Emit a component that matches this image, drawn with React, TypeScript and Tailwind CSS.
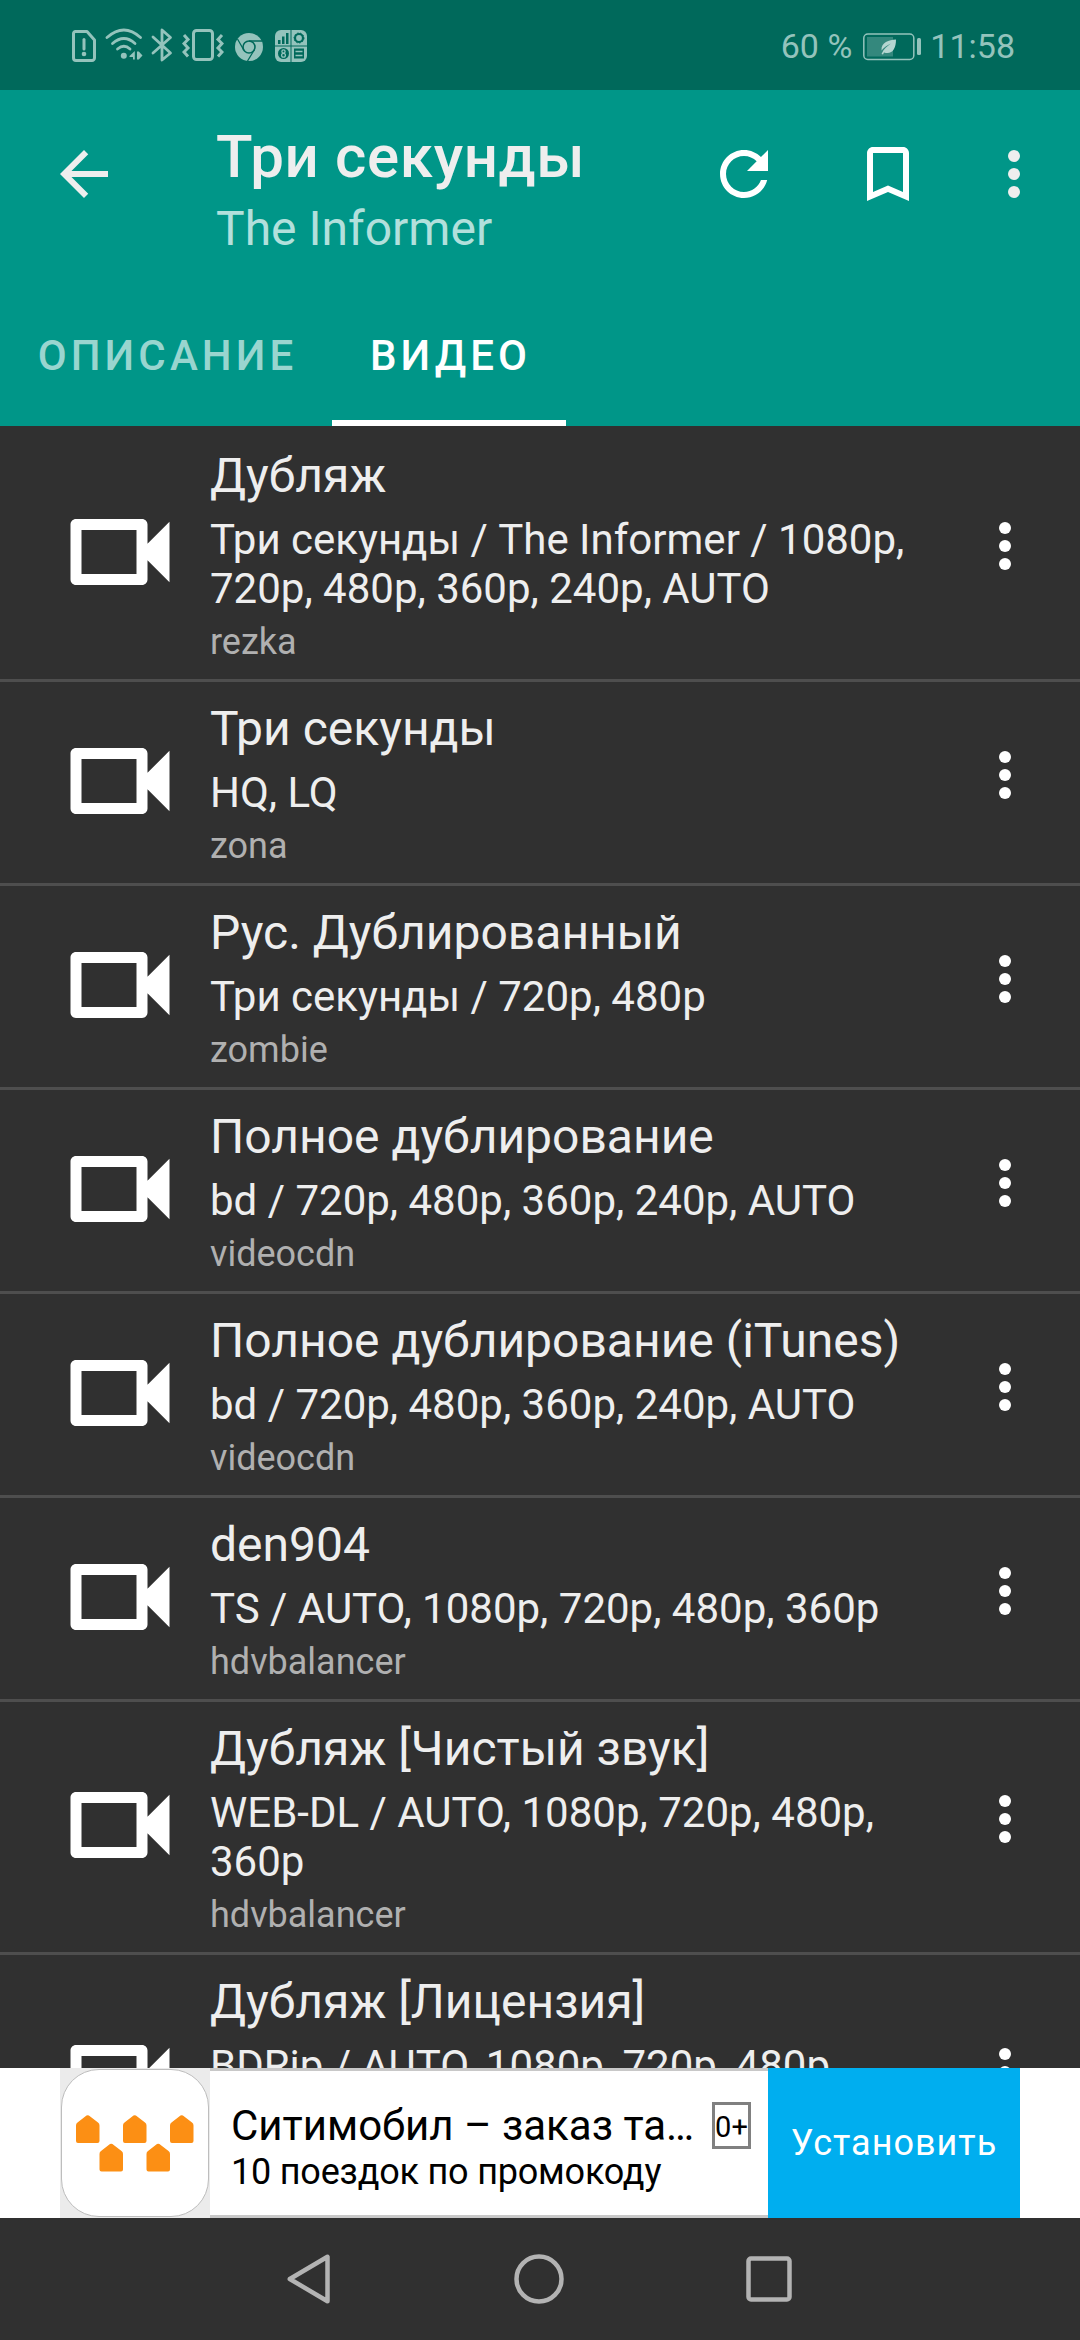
import React from "react";

type Video = { title: string; lines: string; source?: string; tall?: boolean };

const videos: Video[] = [
  { title: "Дубляж", lines: "Три секунды / The Informer / 1080p,\n720p, 480p, 360p, 240p, AUTO", source: "rezka", tall: true },
  { title: "Три секунды", lines: "HQ, LQ", source: "zona" },
  { title: "Рус. Дублированный", lines: "Три секунды / 720p, 480p", source: "zombie" },
  { title: "Полное дублирование", lines: "bd / 720p, 480p, 360p, 240p, AUTO", source: "videocdn" },
  { title: "Полное дублирование (iTunes)", lines: "bd / 720p, 480p, 360p, 240p, AUTO", source: "videocdn" },
  { title: "den904", lines: "TS / AUTO, 1080p, 720p, 480p, 360p", source: "hdvbalancer" },
  { title: "Дубляж [Чистый звук]", lines: "WEB-DL / AUTO, 1080p, 720p, 480p,\n360p", source: "hdvbalancer", tall: true },
  { title: "Дубляж [Лицензия]", lines: "BDRip / AUTO, 1080p, 720p, 480p", tall: true },
];

function MoreIcon({ className }: { className: string }) {
  return (
    <svg viewBox="0 0 24 24" fill="currentColor" className={className}>
      <circle cx="12" cy="6" r="2" />
      <circle cx="12" cy="12" r="2" />
      <circle cx="12" cy="18" r="2" />
    </svg>
  );
}

function VideoIcon() {
  return (
    <svg viewBox="0 0 24 24" fill="white" className="size-[132px]">
      <path d="M15 8v8H5V8h10m1-2H4c-.55 0-1 .45-1 1v10c0 .55.45 1 1 1h12c.55 0 1-.45 1-1v-3.5l4 4v-11l-4 4V7c0-.55-.45-1-1-1z" />
    </svg>
  );
}

function StatusIcons() {
  return (
    <div className="flex h-full items-center">
      <svg width="26" height="34" viewBox="0 0 26 34" fill="none" stroke="currentColor" strokeWidth="3" className="mt-px">
        <path d="M4 2.500H16L23.500 11V29a2.500 2.500 0 0 1-2.500 2.500H5A2.500 2.500 0 0 1 2.500 29V4.500A2 2 0 0 1 4.500 2.500Z" strokeLinejoin="round" />
        <path d="M13 10.500V20" strokeLinecap="round" />
        <circle cx="13" cy="25" r="2.300" fill="currentColor" stroke="none" />
      </svg>
      <svg width="38" height="34" viewBox="0 0 38 34" fill="none" stroke="currentColor" strokeWidth="2.800" strokeLinecap="round" className="ml-2">
        <path d="M2 9.500Q19 -5.500 35.500 9.500" />
        <path d="M7.500 15.500Q19 5.500 30 15.500" />
        <path d="M12.500 21Q19 15.500 25 21" />
        <circle cx="18.800" cy="27.800" r="3" fill="currentColor" stroke="none" />
        <path d="M24.500 28L29.800 23V31.500H28V29H24.500ZM32 23.500H33.800L37.500 27.500L33.800 31.500H32Z" fill="currentColor" stroke="none" />
      </svg>
      <svg width="22" height="34" viewBox="0 0 22 34" fill="none" stroke="currentColor" strokeWidth="2.800" strokeLinejoin="round" strokeLinecap="round" className="ml-2">
        <path d="M2 9l17.500 16-8.500 7V2l8.500 7.500L2 25" />
      </svg>
      <svg width="42" height="34" viewBox="0 0 42 34" fill="none" stroke="currentColor" strokeWidth="3" className="ml-[9px]">
        <rect x="11.500" y="2.500" width="19" height="29" rx="3" />
        <path d="M2 7l4 4.500-4 4 4 4.500-4 4 4 4.500M40 7l-4 4.500 4 4-4 4.500 4 4-4 4.500" />
      </svg>
      <svg width="28" height="28" viewBox="0 0 28 28" className="mt-[3px] ml-[11px]">
        <circle cx="14" cy="14" r="14" fill="currentColor" />
        <g fill="none" stroke="#00695b" strokeWidth="1.300">
          <circle cx="14" cy="14" r="6" strokeWidth="1.600" />
          <path d="M14 8H27M8.800 17L2.500 6M19.200 17L12.500 28" />
        </g>
      </svg>
      <svg width="32" height="32" viewBox="0 0 32 32" className="mt-[2px] ml-3">
        <rect width="32" height="32" rx="6" fill="currentColor" />
        <g fill="#00695b">
          <path d="M3 10h2.500v4H3zM7 6.500h2.500V14H7zM11 3h2.500v11H11zM0 15.500h32v1H0zM15.500 0h1v32h-1z" />
          <circle cx="8.500" cy="23.500" r="5.500" />
          <path d="M19 18.500h10v10H19z" />
        </g>
        <circle cx="24" cy="8" r="4" fill="none" stroke="#00695b" strokeWidth="2.200" />
        <circle cx="24" cy="8" r="5" fill="none" stroke="#00695b" strokeWidth="1" strokeDasharray="1.500 1.500" />
        <g fill="none" stroke="currentColor" strokeWidth="1.300">
          <circle cx="8.500" cy="21.500" r="1.600" />
          <circle cx="8.500" cy="25.200" r="1.900" />
          <path d="M20.500 21.500h7M20.500 25.500h7" strokeWidth="1.500" />
        </g>
      </svg>
    </div>
  );
}

function Battery() {
  return (
    <svg width="60" height="30" viewBox="0 0 60 30" className="mt-[2px] ml-[9px]">
      <rect x="2.800" y="2" width="50" height="25.500" rx="4" fill="none" stroke="currentColor" strokeWidth="1.500" />
      <rect x="6" y="5" width="26" height="19.500" fill="currentColor" opacity="0.350" />
      <rect x="56" y="6" width="4" height="17" rx="1.500" fill="currentColor" />
      <path d="M35 7.500C28 8 20 10 20.500 18.500C23 15 27 13 30 11.500C26.500 14 22.500 17 20.500 22L22 22.500L23 20.500C31 23 35 17 35 7.500Z" fill="#b5d6d1" />
    </svg>
  );
}

function VideoRow({ video }: { video: Video }) {
  return (
    <li className="flex shrink-0 items-start border-b-[3px] border-[#4e4e4e] pl-[54px]">
      <div className={video.tall ? "shrink-0 pt-[57px]" : "shrink-0 pt-[33px]"}>
        <VideoIcon />
      </div>
      <div className="ml-6 flex-1 pt-[18px] pb-4">
        <h2 className="text-[48px] leading-[57px] text-[#eeeeee]">{video.title}</h2>
        <p className="mt-[11px] text-[42px] leading-[49px] whitespace-pre text-[#eeeeee]">{video.lines}</p>
        {video.source && <p className="mt-2 text-[36px] leading-[42px] text-[#b0b0b0]">{video.source}</p>}
      </div>
      <div className={video.tall ? "mr-[39px] shrink-0 pt-[81px]" : "mr-[39px] shrink-0 pt-[57px]"}>
        <MoreIcon className="size-[72px] text-white" />
      </div>
    </li>
  );
}

function House({ x, y }: { x: number; y: number }) {
  return <path transform={`translate(${x} ${y})`} d="M1.500 7.500L10.500 .6a2 2 0 0 1 2.400 0L22 7.500a3.500 3.500 0 0 1 1.500 3V26a2 2 0 0 1-2 2H2a2 2 0 0 1-2-2V10.500a3.500 3.500 0 0 1 1.500-3Z" />;
}

export default function App() {
  return (
    <div className="flex h-[2340px] w-[1080px] flex-col overflow-hidden bg-[#303030] font-[Roboto,sans-serif]">
      <div className="flex h-[90px] shrink-0 items-center justify-between bg-[#00695b] pr-[65px] pl-[71px] text-[#94c3bc]">
        <StatusIcons />
        <div className="flex items-center pt-px text-[34px] leading-[40px]">
          <span>60 %</span>
          <Battery />
          <span className="ml-[9px]">11:58</span>
        </div>
      </div>

      <header className="flex h-[336px] shrink-0 flex-col justify-between bg-[#009688]">
        <div className="flex h-[192px] items-start pt-12 pr-[30px] pl-12">
          <svg viewBox="0 0 24 24" fill="#eeeeee" className="size-[72px]">
            <path d="M20 11H7.830l5.590-5.590L12 4l-8 8 8 8 1.410-1.410L7.830 13H20v-2z" />
          </svg>
          <div className="-mt-[17px] ml-24 flex-1">
            <h1 className="text-[60px] leading-[71px] font-medium tracking-[0.65px] whitespace-nowrap text-[#eeeeee]">Три секунды</h1>
            <p className="mt-2 text-[48px] leading-[57px] text-[#b2e0dc]">The Informer</p>
          </div>
          <svg viewBox="0 0 24 24" fill="white" className="size-[72px]">
            <path d="M17.650 6.350C16.200 4.900 14.210 4 12 4c-4.420 0-7.990 3.580-7.990 8s3.570 8 7.990 8c3.730 0 6.840-2.550 7.730-6h-2.080c-.82 2.330-3.040 4-5.650 4-3.310 0-6-2.690-6-6s2.690-6 6-6c1.660 0 3.140.69 4.220 1.780L13 11h7V4l-2.350 2.350z" />
          </svg>
          <svg viewBox="0 0 24 24" fill="white" className="ml-[72px] size-[72px]">
            <path d="M17 3H7c-1.100 0-1.990.9-1.990 2L5 21l7-3 7 3V5c0-1.100-.9-2-2-2zm0 15l-5-2.180L7 18V5h10v13z" />
          </svg>
          <MoreIcon className="ml-[54px] size-[72px] text-[#eeeeee]" />
        </div>
        <nav className="flex h-[144px] text-[42px] leading-[49px] font-medium tracking-[4.1px]">
          <div className="flex w-[332px] items-start justify-center pt-[49px] pl-[3px] text-[#99d5cf]">ОПИСАНИЕ</div>
          <div className="flex w-[234px] items-start justify-center border-b-[6px] border-white pt-[49px] pl-[3px] text-white">ВИДЕО</div>
        </nav>
      </header>

      <ul className="flex min-h-0 flex-1 flex-col overflow-hidden pt-[3px]">
        {videos.map((video) => (
          <VideoRow key={video.title} video={video} />
        ))}
      </ul>

      <div className="flex h-[150px] shrink-0 bg-white px-[60px]">
        <div className="w-[150px] bg-[#ebebeb] p-px">
          <div className="size-[148px] rounded-[38px] border border-[#bdbdbd] bg-white">
            <svg viewBox="0 0 146 146" className="size-[146px]" fill="#fc8f14">
              <House x={14} y={45} />
              <House x={61} y={45} />
              <House x={108} y={45} />
              <House x={37.5} y={73.5} />
              <House x={84.5} y={73.5} />
            </svg>
          </div>
        </div>
        <div className="flex w-[558px] border-y-[3px] border-[#c8c8c8] pr-[17px] pl-[21px] text-black">
          <div className="min-w-0 flex-1 pt-[30px]">
            <p className="text-[42px] leading-[49px] whitespace-nowrap">Ситимобил – заказ та…</p>
            <p className="mt-px text-[36px] leading-[42px] tracking-[-0.2px] whitespace-nowrap">10 поездок по промокоду</p>
          </div>
          <div className="mt-[31px] flex h-[47px] w-[39px] items-center justify-center border-[3px] border-[#808080] pt-[3px] text-[29px] leading-[34px]">0+</div>
        </div>
        <div className="flex w-[252px] items-center justify-center bg-[#00aeef] text-[36px] leading-[42px] tracking-[1px] text-white">Установить</div>
      </div>

      <div className="flex h-[122px] shrink-0 items-center justify-between pr-[288px] pl-[287px]">
        <svg width="43" height="50" viewBox="0 0 43 50" fill="none" stroke="#b3b3b3" strokeWidth="4.500" strokeLinejoin="round">
          <path d="M40.500 2.800V47.200L2.800 25Z" />
        </svg>
        <svg width="50" height="50" viewBox="0 0 50 50" fill="none" stroke="#b3b3b3" strokeWidth="4.500" className="ml-[2px]">
          <circle cx="25" cy="25" r="22.500" />
        </svg>
        <svg width="46" height="46" viewBox="0 0 46 46" fill="none" stroke="#b3b3b3" strokeWidth="4.500">
          <rect x="2.500" y="2.500" width="41" height="41" rx="2.500" />
        </svg>
      </div>
    </div>
  );
}
